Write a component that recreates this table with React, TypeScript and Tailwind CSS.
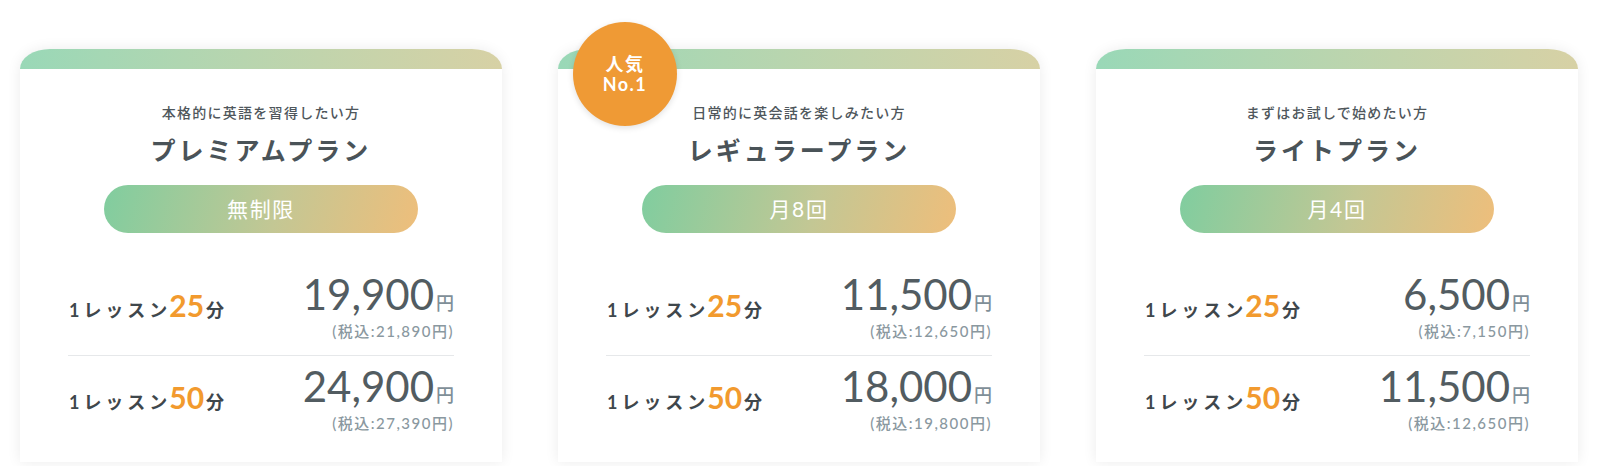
const plans = [
  {
    lead: "本格的に英語を習得したい方",
    name: "プレミアムプラン",
    count: "無制限",
    badge: false,
    rows: [
      { min: "25", price: "19,900", tax: "21,890" },
      { min: "50", price: "24,900", tax: "27,390" },
    ],
  },
  {
    lead: "日常的に英会話を楽しみたい方",
    name: "レギュラープラン",
    count: "月8回",
    badge: true,
    rows: [
      { min: "25", price: "11,500", tax: "12,650" },
      { min: "50", price: "18,000", tax: "19,800" },
    ],
  },
  {
    lead: "まずはお試しで始めたい方",
    name: "ライトプラン",
    count: "月4回",
    badge: false,
    rows: [
      { min: "25", price: "6,500", tax: "7,150" },
      { min: "50", price: "11,500", tax: "12,650" },
    ],
  },
];

const font = "font-['Lato','Noto_Sans_CJK_JP',sans-serif]";

function PriceRow({
  min,
  price,
  tax,
  first,
}: {
  min: string;
  price: string;
  tax: string;
  first: boolean;
}) {
  return (
    <div
      className={
        first
          ? "flex items-center justify-between border-b border-[#e6e8ea] pb-[14px]"
          : "flex items-center justify-between pt-[9px]"
      }
    >
      <div className="flex items-baseline pl-[1px] font-bold text-[#3f474c]">
        <span className="text-[18px] tracking-[0.22em]">1レッス</span>
        <span className="mr-[2px] text-[18px]">ン</span>
        <span className="text-[30px] leading-none text-[#f29a2e]">{min}</span>
        <span className="ml-[2px] text-[18px]">分</span>
      </div>
      <div className="text-right">
        <div className="text-[42px] leading-none text-[#525c61]">
          {price}
          <span className="ml-[2px] text-[18px] font-medium text-[#7f8f98]">
            円
          </span>
        </div>
        <div className="mt-[6px] text-[15px] font-medium leading-[20px] tracking-[0.1em] text-[#8a98a0]">
          (税込:{tax}円)
        </div>
      </div>
    </div>
  );
}

export default function App() {
  return (
    <div
      className={`flex h-[466px] w-[1600px] gap-[56px] overflow-hidden bg-white pl-[20px] pt-[49px] ${font}`}
    >
      {plans.map((plan) => (
        <div key={plan.name} className="relative w-[482px] shrink-0">
          <div className="h-[413px] overflow-hidden rounded-tl-[30px_20px] rounded-tr-[30px_20px] bg-white shadow-[0_0_14px_rgba(0,0,0,0.08)]">
            <div className="h-[20px] bg-gradient-to-r from-[#99d8b7] to-[#d7d1a5]" />
            <div className="px-[48px]">
              <p className="mt-[34px] text-center text-[14px] font-medium leading-[20px] tracking-[0.09em] text-[#4f575c]">
                {plan.lead}
              </p>
              <h2 className="mt-[9px] text-center text-[25px] font-semibold leading-[36px] tracking-[0.12em] text-[#4a5358]">
                {plan.name}
              </h2>
              <div className="mx-auto mt-[17px] flex h-[48px] w-[314px] items-center justify-center rounded-full bg-[linear-gradient(105deg,#80cd9f_0%,#c3c794_55%,#eebe7b_100%)] text-[21px] tracking-[0.08em] text-white">
                {plan.count}
              </div>
              <div className="mt-[40px]">
                {plan.rows.map((row, i) => (
                  <PriceRow key={row.min} {...row} first={i === 0} />
                ))}
              </div>
            </div>
          </div>
          {plan.badge ? (
            <div className="absolute left-[15px] top-[-27px] flex h-[104px] w-[104px] flex-col items-center justify-center rounded-full bg-[#ef9a35] text-[18px] font-bold leading-[20px] tracking-[0.08em] text-white shadow-[0_2px_6px_rgba(0,0,0,0.12)]">
              <span>人気</span>
              <span>No.1</span>
            </div>
          ) : null}
        </div>
      ))}
    </div>
  );
}
